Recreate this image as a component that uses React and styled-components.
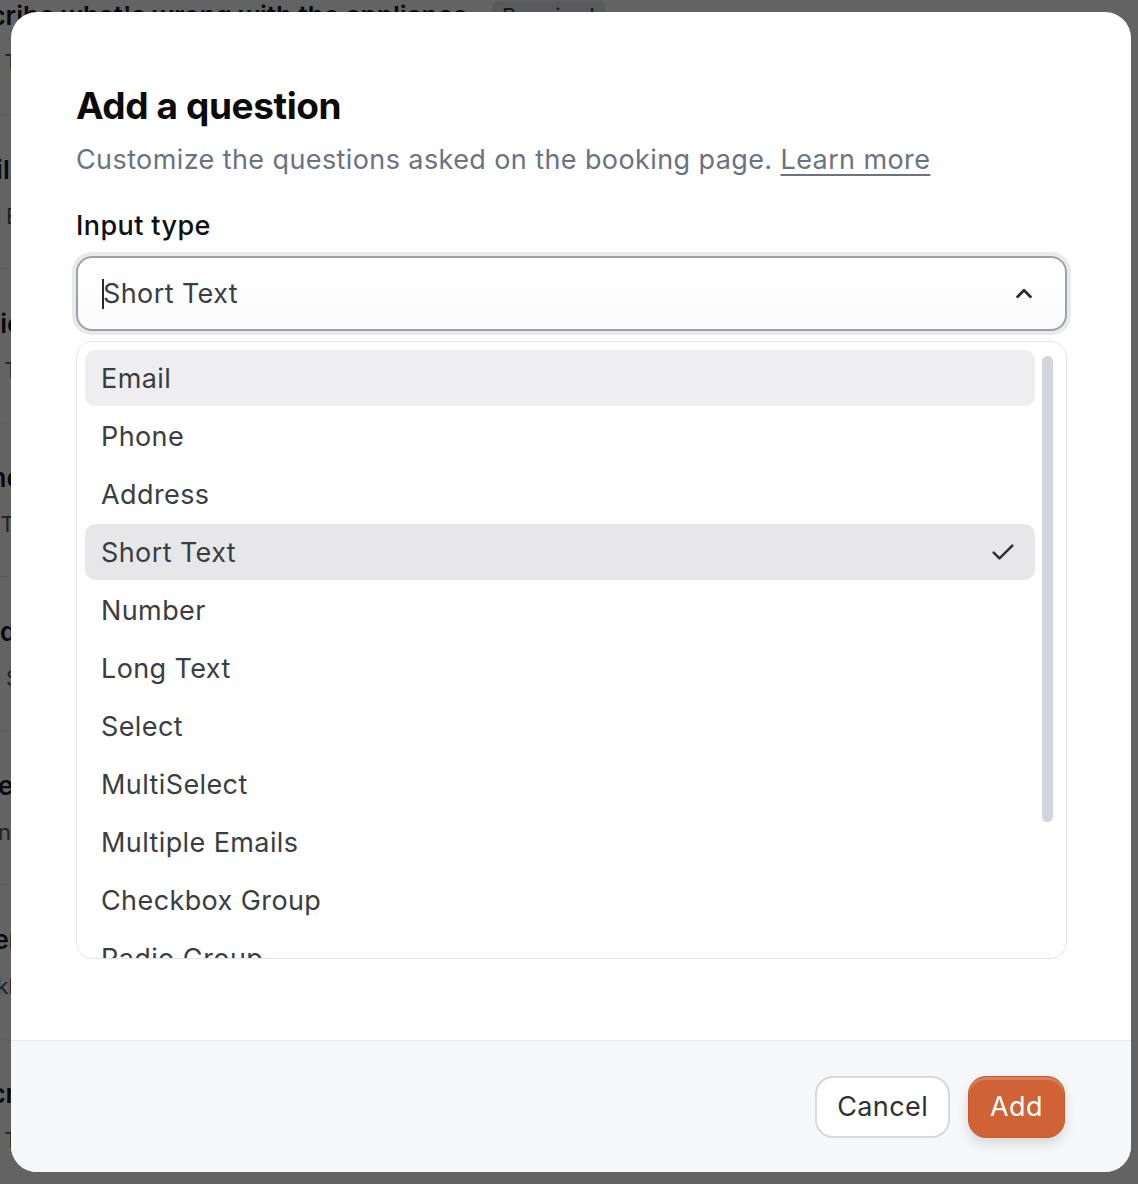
import styled, { createGlobalStyle } from "styled-components";

const GlobalStyle = createGlobalStyle`
  html, body {
    margin: 0;
    padding: 0;
    background: #fff;
    font-family: Inter, "Noto Sans", sans-serif;
    -webkit-font-smoothing: antialiased;
  }
  * { box-sizing: border-box; }
`;

const Screen = styled.div`
  position: relative;
  width: 1138px;
  height: 1184px;
  overflow: hidden;
  background: #fff;
`;

// page that sits behind the dialog
const BgPage = styled.div`
  margin-left: -58px;
  margin-top: -39px;
  width: 900px;
`;

const BgRow = styled.div`
  height: 154px;
  padding-top: 38px;
  border-bottom: 1px solid #e5e7eb;
`;

const BgLabelLine = styled.div`
  display: flex;
  align-items: center;
  gap: 24px;
`;

const BgLabel = styled.div`
  font-size: 26px;
  font-weight: 600;
  color: #111827;
  line-height: 34px;
`;

const BgBadge = styled.span`
  background: #e5e7eb;
  color: #374151;
  font-size: 22px;
  padding: 2px 10px;
  border-radius: 6px;
`;

const BgSub = styled.div`
  margin-top: 14px;
  font-size: 22px;
  color: #4b5563;
  line-height: 30px;
`;

const Overlay = styled.div`
  position: absolute;
  inset: 0;
  background: rgba(0, 0, 0, 0.61);
  display: flex;
  padding: 12px 7px 12px 11px;
`;

const Modal = styled.div`
  flex: 1;
  background: #fff;
  border-radius: 26px;
  overflow: hidden;
  display: flex;
  flex-direction: column;
`;

const Body = styled.div`
  flex: 1;
  padding: 70px 64px 0 65px;
`;

const Title = styled.h2`
  margin: 0;
  font-size: 37px;
  line-height: 48px;
  font-weight: 700;
  letter-spacing: -0.4px;
  color: #0b0b0c;
`;

const Subtitle = styled.p`
  margin: 12px 0 0;
  font-size: 27px;
  line-height: 36px;
  color: #6b7280;
  letter-spacing: 0.4px;
`;

const LearnMore = styled.a`
  color: #6b7280;
  text-decoration: underline;
  text-underline-offset: 5px;
  text-decoration-thickness: 2px;
`;

const FieldLabel = styled.div`
  margin-top: 30px;
  font-size: 27px;
  line-height: 36px;
  font-weight: 500;
  letter-spacing: 0.4px;
  color: #0f1011;
`;

const SelectBox = styled.div`
  margin-top: 12px;
  height: 75px;
  border: 2px solid #9ca0a8;
  border-radius: 16px;
  box-shadow: 0 0 0 4px #e8e9eb;
  display: flex;
  align-items: center;
  padding: 0 30px 0 24px;
  background: linear-gradient(#fff, #fbfbfb);
`;

const Caret = styled.span`
  width: 2px;
  height: 30px;
  background: #1f2937;
  margin-right: -1px;
`;

const SelectValue = styled.span`
  flex: 1;
  font-size: 27px;
  letter-spacing: 0.4px;
  color: #3a3d42;
`;

const Dropdown = styled.div`
  margin-top: 10px;
  height: 618px;
  border: 1px solid #e4e5e8;
  border-radius: 16px;
  display: flex;
  overflow: hidden;
`;

const OptionList = styled.div`
  flex: 1;
  padding: 8px 0 0 8px;
  display: flex;
  flex-direction: column;
  gap: 2px;
  overflow: hidden;
`;

const Option = styled.div`
  flex-shrink: 0;
  height: 56px;
  border-radius: 10px;
  display: flex;
  align-items: center;
  justify-content: space-between;
  padding: 0 18px 0 16px;
  font-size: 27px;
  letter-spacing: 0.4px;
  color: #3a3d42;
  background: ${(p) => (p.$selected ? "#e7e7ea" : p.$hover ? "#eeeef0" : "transparent")};
`;

const ScrollTrack = styled.div`
  width: 31px;
  padding: 14px 13px 0 7px;
`;

const ScrollThumb = styled.div`
  height: 466px;
  background: #d3d5da;
  border-radius: 6px;
`;

const Footer = styled.div`
  height: 132px;
  background: #f6f7f9;
  border-top: 1px solid #e8e9ec;
  display: flex;
  align-items: center;
  justify-content: flex-end;
  gap: 18px;
  padding: 0 66px 0 0;
`;

const Button = styled.button`
  height: 62px;
  border-radius: 18px;
  font-family: Inter, "Noto Sans", sans-serif;
  font-size: 27px;
  letter-spacing: 0.4px;
  padding: 0 ${(p) => (p.$primary ? "21px" : "20px")};
  cursor: pointer;
  border: ${(p) => (p.$primary ? "1px solid #c85c30" : "2px solid #d6d8dc")};
  background: ${(p) => (p.$primary ? "#cf6336" : "#fff")};
  color: ${(p) => (p.$primary ? "#fff" : "#2f3237")};
  box-shadow: ${(p) =>
    p.$primary
      ? "inset 0 3px 0 rgba(255,255,255,0.18), 0 6px 12px rgba(0,0,0,0.12)"
      : "none"};
`;

const bgRows = [
  ["Describe what's wrong with the appliance", "Short Text", true],
  ["Email address", "Type: Email"],
  ["Service address", "Short Text"],
  ["Phone number", "Long Text"],
  ["Brand of the appliance", "Type: Select"],
  ["Model number", "Optional - Short Text"],
  ["Preferred contact time", "Checkbox Group"],
  ["Description of issue", "Short Text"],
];

const options = [
  "Email",
  "Phone",
  "Address",
  "Short Text",
  "Number",
  "Long Text",
  "Select",
  "MultiSelect",
  "Multiple Emails",
  "Checkbox Group",
  "Radio Group",
  "Checkbox",
];

function ChevronUp() {
  return (
    <svg width="22" height="22" viewBox="0 0 24 24" fill="none" stroke="#2a2c30" strokeWidth="3" strokeLinecap="round" strokeLinejoin="round">
      <path d="M5 15l7-7 7 7" />
    </svg>
  );
}

function Check() {
  return (
    <svg width="28" height="28" viewBox="0 0 24 24" fill="none" stroke="#2f3237" strokeWidth="2.2" strokeLinecap="round" strokeLinejoin="round">
      <path d="M4 12.5l5 5L20 6.5" />
    </svg>
  );
}

export default function App() {
  return (
    <>
      <GlobalStyle />
      <Screen>
        <BgPage>
          {bgRows.map(([label, sub, req]) => (
            <BgRow key={label}>
              <BgLabelLine>
                <BgLabel>{label}</BgLabel>
                {req && <BgBadge>Required</BgBadge>}
              </BgLabelLine>
              <BgSub>{sub}</BgSub>
            </BgRow>
          ))}
        </BgPage>
        <Overlay>
          <Modal>
            <Body>
              <Title>Add a question</Title>
              <Subtitle>
                Customize the questions asked on the booking page.{" "}
                <LearnMore href="#">Learn more</LearnMore>
              </Subtitle>
              <FieldLabel>Input type</FieldLabel>
              <SelectBox>
                <Caret />
                <SelectValue>Short Text</SelectValue>
                <ChevronUp />
              </SelectBox>
              <Dropdown>
                <OptionList>
                  {options.map((o, i) => (
                    <Option key={o} $hover={i === 0} $selected={o === "Short Text"}>
                      {o}
                      {o === "Short Text" && <Check />}
                    </Option>
                  ))}
                </OptionList>
                <ScrollTrack>
                  <ScrollThumb />
                </ScrollTrack>
              </Dropdown>
            </Body>
            <Footer>
              <Button>Cancel</Button>
              <Button $primary>Add</Button>
            </Footer>
          </Modal>
        </Overlay>
      </Screen>
    </>
  );
}
